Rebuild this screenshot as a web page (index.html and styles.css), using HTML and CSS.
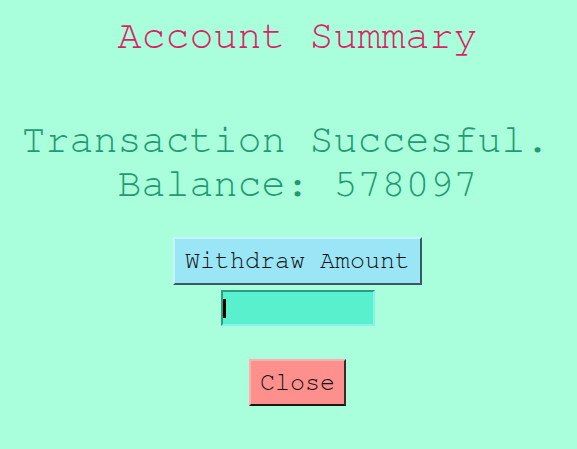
FILE: index.html
```html
<!DOCTYPE html>
<html lang="en">
<head>
<meta charset="utf-8">
<title>Account Summary</title>
<link rel="stylesheet" href="styles.css">
</head>
<body>
<main class="page">
  <h1 class="title">Account Summary</h1>
  <p class="message">Transaction Succesful.&nbsp;<br>Balance: 578097</p>
  <button class="btn btn-withdraw" type="button">Withdraw Amount</button>
  <span class="field"><input class="amount" type="text" aria-label="Amount"></span>
  <button class="btn btn-close" type="button">Close</button>
</main>
</body>
</html>
```
FILE: styles.css
```css
html, body {
  margin: 0;
  padding: 0;
  background: #a9fedb;
}
body {
  font-family: "FreeMono", "Liberation Mono", monospace;
}
.page {
  display: flex;
  flex-direction: column;
  align-items: center;
  padding: 14px 0 0 18px;
}
.title {
  margin: 0;
  font-size: 40px;
  font-weight: normal;
  line-height: 45px;
  color: #dc1f66;
  white-space: nowrap;
}
.message {
  margin: 59px 0 0;
  font-size: 40px;
  line-height: 44px;
  text-align: center;
  color: #1f9a72;
  white-space: nowrap;
}
.btn {
  font-family: "FreeMono", "Liberation Mono", monospace;
  font-size: 25px;
  line-height: 28px;
  color: #111;
  cursor: pointer;
}
.btn-withdraw {
  margin-top: 31px;
  height: 48px;
  padding: 0 10px;
  background: #9ae6f7;
  border: 2px solid;
  border-top-color: #c6f2fb;
  border-left-color: #c6f2fb;
  border-right-color: #3b5a60;
  border-bottom-color: #3b5a60;
}
.field {
  position: relative;
  display: block;
  margin-top: 5px;
}
.amount {
  display: block;
  box-sizing: border-box;
  width: 154px;
  height: 36px;
  margin: 0;
  padding: 0 4px;
  background: #58f0cd;
  border: 2px solid;
  border-top-color: #2e9c82;
  border-left-color: #2e9c82;
  border-right-color: #86f4e6;
  border-bottom-color: #86f4e6;
  outline: none;
  font-family: "FreeMono", "Liberation Mono", monospace;
  font-size: 20px;
}
.field::after {
  content: "";
  position: absolute;
  left: 2px;
  top: 9px;
  width: 3px;
  height: 19px;
  background: #000;
}
.btn-close {
  margin-top: 33px;
  height: 47px;
  padding: 0 9px;
  background: #fd8f8c;
  border: 2px solid;
  border-top-color: #fbb0ae;
  border-left-color: #fbb0ae;
  border-right-color: #3a2a2a;
  border-bottom-color: #1d1414;
}
```
